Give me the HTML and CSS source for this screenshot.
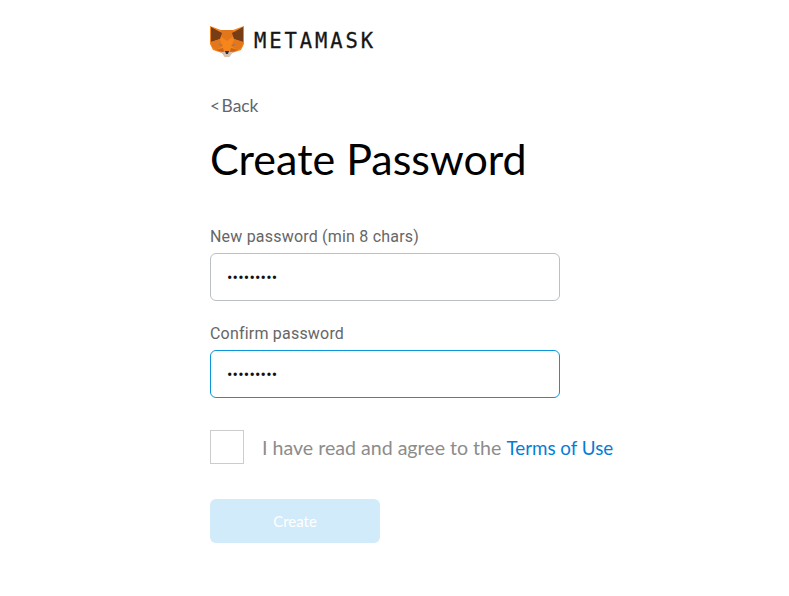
FILE: index.html
```html
<!DOCTYPE html>
<html lang="en">
<head>
<meta charset="utf-8">
<title>Create Password</title>
<link rel="stylesheet" href="styles.css">
</head>
<body>
<main class="page">
  <header class="brand">
    <svg class="fox" viewBox="0 0 34 31" width="34" height="31" aria-hidden="true">
      <polygon fill="#f6851b" points="0,0 11,4 23,4 34,0 34,18 31,24 22,27 19,31 15,31 12,27 3,24 0,18"/>
      <polygon fill="#e2761b" points="11,4 23,4 25,9 17,15 9,9"/>
      <polygon fill="#763d16" points="1,1 12,7 10,13 1,16"/>
      <polygon fill="#763d16" points="33,1 22,7 24,13 33,16"/>
      <polygon fill="#e4761b" points="1,16 10,13 13,20 6,24 2,21"/>
      <polygon fill="#e4761b" points="33,16 24,13 21,20 28,24 32,21"/>
      <polygon fill="#f6851b" points="10,13 17,15 24,13 21,22 13,22"/>
      <polygon fill="#8a7a6e" points="8,18 13,19 11,20"/>
      <polygon fill="#8a7a6e" points="26,18 21,19 23,20"/>
      <polygon fill="#cd6116" points="13,22 14,26 9,25 6,24"/>
      <polygon fill="#cd6116" points="21,22 20,26 25,25 28,24"/>
      <polygon fill="#d7c1b3" points="11,26 23,26 19,31 15,31"/>
      <polygon fill="#233447" points="15,25 19,25 18,28 16,28"/>
    </svg>
    <span class="wordmark">METAMASK</span>
  </header>
  <a class="back" href="#">&lt; Back</a>
  <h1 class="title">Create Password</h1>
  <form class="form">
    <div class="field">
      <label class="label" for="pw1">New password (min 8 chars)</label>
      <input class="input" id="pw1" type="password" value="password1">
    </div>
    <div class="field">
      <label class="label" for="pw2">Confirm password</label>
      <input class="input input-focus" id="pw2" type="password" value="password1">
    </div>
    <div class="terms">
      <span class="check"></span>
      <span class="terms-text">I have read and agree to the <a class="link" href="#">Terms of Use</a></span>
    </div>
    <button class="create" type="button">Create</button>
  </form>
</main>
</body>
</html>
```
FILE: styles.css
```css
* { box-sizing: border-box; }
html, body { margin: 0; background: #fff; }
.page {
  width: 789px;
  height: 596px;
  padding: 25px 0 0 210px;
  font-family: Lato, "Liberation Sans", sans-serif;
  overflow: hidden;
}
.brand { display: flex; align-items: center; gap: 10px; height: 32px; }
.fox { display: block; }
.wordmark {
  font-family: "DejaVu Sans Mono", "Liberation Mono", monospace;
  font-size: 20.5px;
  letter-spacing: 2.9px;
  color: #161616;
  font-weight: 400;
  -webkit-text-stroke: 0.3px #161616;
}
.back {
  display: block;
  margin-top: 39px;
  font-size: 17.4px;
  line-height: 20px;
  word-spacing: -3px;
  color: #62666d;
  text-decoration: none;
}
.title {
  margin: 18px 0 0;
  font-size: 43px;
  line-height: 50px;
  font-weight: 400;
  color: #000;
}
.form { margin-top: 42px; display: flex; flex-direction: column; }
.field { display: flex; flex-direction: column; margin-bottom: 22px; }
.label {
  font-family: Roboto, sans-serif;
  font-size: 16px;
  letter-spacing: 0.2px;
  line-height: 19px;
  color: #666;
  margin-bottom: 7px;
  padding-top: 1px;
}
.input {
  width: 350px;
  height: 48px;
  border: 1px solid #bbc0c5;
  border-radius: 6px;
  padding: 0 16px;
  font-family: Roboto, sans-serif;
  font-size: 16px;
  letter-spacing: 0.2px;
  color: #111;
  background: #fff;
  outline: none;
}
.input-focus { border-color: #0a96d8; }
.terms { display: flex; align-items: center; gap: 18px; margin-top: 10px; }
.check { width: 34px; height: 34px; border: 1px solid #ccc; background: #fff; }
.terms-text { font-size: 19.6px; color: #8c8c8c; }
.link { font-size: 18.8px; color: #037dd6; text-decoration: none; }
.create {
  margin-top: 35px;
  width: 170px;
  height: 44px;
  border: 0;
  border-radius: 6px;
  background: #d1ebfb;
  color: #fff;
  font-family: Lato, sans-serif;
  font-size: 15px;
}
```
